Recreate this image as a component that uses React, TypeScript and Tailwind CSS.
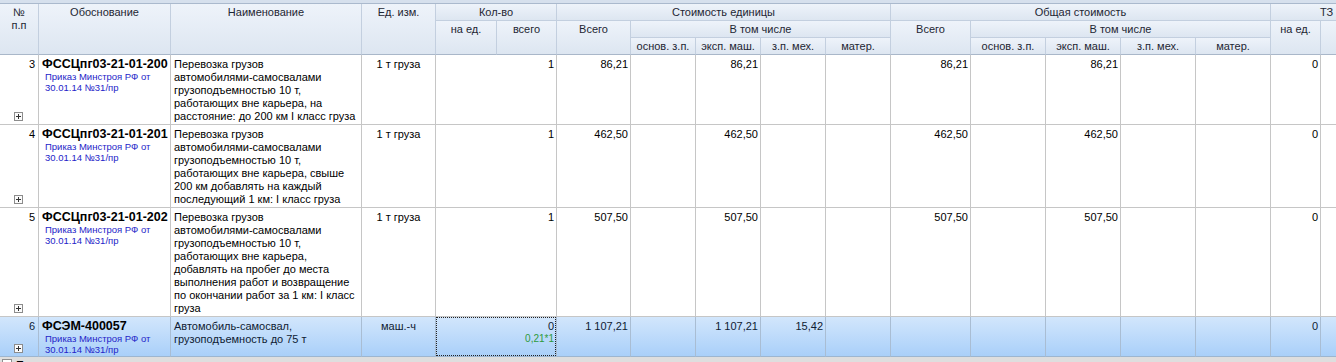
import React from 'react';

const GRID =
  'grid grid-cols-[39px_132px_191px_74px_61px_60px_74px_65px_65px_65px_65px_80px_75px_75px_75px_75px_50px_62px]';

type Row = {
  n: number;
  code: string;
  name: string[];
  unit: string;
  qty: string;
  qtyNote?: string;
  unitCost: string[];
  totalCost: string[];
  tz: string;
  selected?: boolean;
};

// lines are broken the way the grid wraps them (no break on hyphen)
const rows: Row[] = [
  {
    n: 3,
    code: 'ФССЦпг03-21-01-200',
    name: [
      'Перевозка грузов',
      'автомобилями-самосвалами',
      'грузоподъемностью 10 т,',
      'работающих вне карьера, на',
      'расстояние: до 200 км I класс груза',
    ],
    unit: '1 т груза',
    qty: '1',
    unitCost: ['86,21', '', '86,21', '', ''],
    totalCost: ['86,21', '', '86,21', '', ''],
    tz: '0',
  },
  {
    n: 4,
    code: 'ФССЦпг03-21-01-201',
    name: [
      'Перевозка грузов',
      'автомобилями-самосвалами',
      'грузоподъемностью 10 т,',
      'работающих вне карьера, свыше',
      '200 км добавлять на каждый',
      'последующий 1 км: I класс груза',
    ],
    unit: '1 т груза',
    qty: '1',
    unitCost: ['462,50', '', '462,50', '', ''],
    totalCost: ['462,50', '', '462,50', '', ''],
    tz: '0',
  },
  {
    n: 5,
    code: 'ФССЦпг03-21-01-202',
    name: [
      'Перевозка грузов',
      'автомобилями-самосвалами',
      'грузоподъемностью 10 т,',
      'работающих вне карьера,',
      'добавлять на пробег до места',
      'выполнения работ и возвращение',
      'по окончании работ за 1 км: I класс',
      'груза',
    ],
    unit: '1 т груза',
    qty: '1',
    unitCost: ['507,50', '', '507,50', '', ''],
    totalCost: ['507,50', '', '507,50', '', ''],
    tz: '0',
  },
  {
    n: 6,
    code: 'ФСЭМ-400057',
    name: ['Автомобиль-самосвал,', 'грузоподъемность до 75 т'],
    unit: 'маш.-ч',
    qty: '0',
    qtyNote: '0,21*1',
    unitCost: ['1 107,21', '', '1 107,21', '15,42', ''],
    totalCost: ['', '', '', '', ''],
    tz: '0',
    selected: true,
  },
];

const PlusBox = () => (
  <svg width="9" height="9" viewBox="0 0 9 9" className="block">
    <rect x="0.5" y="0.5" width="8" height="8" fill="#fbfbfb" stroke="#8c8c8c" />
    <path d="M2 4.5h5M4.5 2v5" stroke="#333" strokeWidth="1" />
  </svg>
);

const H = ({ children, className = '', bottom = false }: { children?: React.ReactNode; className?: string; bottom?: boolean }) => (
  <div
    className={`border-r border-b bg-linear-to-b from-[#eef3fa] to-[#dde6f1] pt-[2px] text-center text-[#1e2633] whitespace-nowrap overflow-hidden ${
      bottom ? 'border-b-[#a9b7c9] border-r-[#c3cfdf]' : 'border-[#c3cfdf]'
    } ${className}`}
  >
    {children}
  </div>
);

const Header = () => (
  <div className={`${GRID} grid-rows-[17px_17px_17px] border-t border-[#aab9cd]`}>
    <H className="row-span-3" bottom>
      №
      <br />
      п.п
    </H>
    <H className="row-span-3" bottom>Обоснование</H>
    <H className="row-span-3" bottom>Наименование</H>
    <H className="row-span-3" bottom>Ед. изм.</H>
    <H className="col-span-2">Кол-во</H>
    <H className="col-span-5">Стоимость единицы</H>
    <H className="col-span-5">Общая стоимость</H>
    <H className="col-span-2">ТЗ</H>

    <H className="row-span-2" bottom>на ед.</H>
    <H className="row-span-2" bottom>всего</H>
    <H className="row-span-2" bottom>Всего</H>
    <H className="col-span-4">В том числе</H>
    <H className="row-span-2" bottom>Всего</H>
    <H className="col-span-4">В том числе</H>
    <H className="row-span-2" bottom>на ед.</H>
    <H className="row-span-2" bottom></H>

    <H bottom>основ. з.п.</H>
    <H bottom>эксп. маш.</H>
    <H bottom>з.п. мех.</H>
    <H bottom>матер.</H>
    <H bottom>основ. з.п.</H>
    <H bottom>эксп. маш.</H>
    <H bottom>з.п. мех.</H>
    <H bottom>матер.</H>
  </div>
);

const BodyRow = ({ row }: { row: Row }) => {
  const cell = row.selected
    ? 'border-r border-b border-r-[#a9bdd3] border-b-[#9db6d0]'
    : 'border-r border-b border-[#c6c6c6]';
  const num = `${cell} pt-[3px] pb-[1px] pr-[2px] text-right whitespace-nowrap`;

  return (
    <div
      className={`${GRID} ${
        row.selected ? 'bg-linear-to-b from-[#d2e6fc] to-[#a8cff9] text-[#0f1b33]' : 'bg-white text-black'
      }`}
    >
      <div className={`${cell} flex flex-col justify-between pt-[3px] pb-[3px] pl-[14px] pr-[3px]`}>
        <div className="text-right">{row.n}</div>
        <PlusBox />
      </div>
      <div className={`${cell} pt-[3px] pb-[1px] pl-[3px] pr-[1px] overflow-hidden`}>
        <div className="font-bold text-[12.5px] leading-[13px] text-black whitespace-nowrap">{row.code}</div>
        <div className="pl-[3px] text-[9.5px] leading-[11px] text-[#2424c8] whitespace-nowrap">
          Приказ Минстроя РФ от
          <br />
          30.01.14 №31/пр
        </div>
      </div>
      <div className={`${cell} pt-[3px] pb-[1px] pl-[3px] pr-[2px] whitespace-nowrap overflow-hidden`}>
        {row.name.map((l, i) => (
          <div key={i}>{l}</div>
        ))}
      </div>
      <div className={`${cell} pt-[3px] pb-[1px] text-center`}>{row.unit}</div>
      <div className={`${cell} col-span-2 ${row.selected ? 'p-0' : 'pt-[3px] pb-[1px] pr-[2px] text-right'}`}>
        {row.selected ? (
          <div className="h-full border border-dotted border-[#222] pt-[2px] pr-[1px] text-right">
            <div>{row.qty}</div>
            <div className="text-[10px] leading-[11px] text-[#2e9a3c]">{row.qtyNote}</div>
          </div>
        ) : (
          row.qty
        )}
      </div>
      {row.unitCost.map((v, i) => (
        <div key={`u${i}`} className={num}>
          {v}
        </div>
      ))}
      {row.totalCost.map((v, i) => (
        <div key={`t${i}`} className={num}>
          {v}
        </div>
      ))}
      <div className={num}>{row.tz}</div>
      <div className={num}></div>
    </div>
  );
};

export default function App() {
  return (
    <div className="w-[1336px] h-[362px] overflow-hidden bg-white font-['Liberation_Sans',Arial,sans-serif] text-[11px] leading-[13px]">
      <div className="h-[3px] bg-[#d6e0ed]" />
      <div className="w-[1383px]">
        <Header />
        {rows.map((r) => (
          <BodyRow key={r.n} row={r} />
        ))}
      </div>
      <div className="flex h-[12px] items-start gap-[4px] bg-[#dedede] pl-[2px] pt-[2px]">
        <div className="h-[10px] w-[10px] border border-[#8e8e8e] bg-white" />
        <span className="text-[11px] leading-[13px] text-black">Показать итоги</span>
      </div>
    </div>
  );
}
